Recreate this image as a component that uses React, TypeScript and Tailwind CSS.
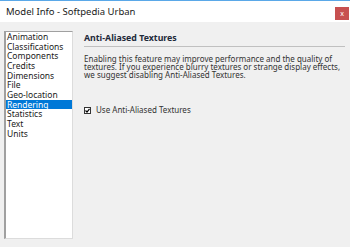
const items = [
  "Animation",
  "Classifications",
  "Components",
  "Credits",
  "Dimensions",
  "File",
  "Geo-location",
  "Rendering",
  "Statistics",
  "Text",
  "Units",
];

export default function App() {
  const selected = "Rendering";

  return (
    <div
      className="flex flex-col w-[350px] h-[247px] bg-[#f0f0f0] overflow-hidden"
      style={{ fontFamily: '"Noto Sans", "Open Sans", sans-serif' }}
    >
      {/* title bar */}
      <div className="flex items-center h-[22px] bg-white border-t border-[#5aa8e8] pl-[6px] pr-[1px]">
        <div className="flex-1 text-[9.5px] text-[#1a1a1a] pt-[2px]">
          Model Info - Softpedia Urban
        </div>
        <div className="flex items-center justify-center w-[14px] h-[13px] bg-[#c75050] mt-[3px]">
          <span className="text-[7px] leading-none text-white">x</span>
        </div>
      </div>

      <div className="flex flex-1">
        {/* category list */}
        <div className="mt-[9px] ml-[4px] w-[69px] h-[208px] bg-white border-l-2 border-t border-[#a0a0a0] border-r border-b border-r-[#dcdcdc] border-b-[#dcdcdc]">
          {items.map((item) => (
            <div
              key={item}
              className={
                item === selected
                  ? "h-[9.67px] leading-[9.67px] pl-[1px] text-[8.5px] bg-[#0078d7] text-white"
                  : "h-[9.67px] leading-[9.67px] pl-[1px] text-[8.5px] text-[#1a1a1a]"
              }
            >
              {item}
            </div>
          ))}
        </div>

        {/* settings panel */}
        <div className="flex-1 ml-[11px] mr-[5px] pt-[11px]">
          <div className="text-[8.8px] font-bold leading-[10px] text-[#1e2a3a] pb-[3px] border-b border-[#c0c0c0]">
            Anti-Aliased Textures
          </div>
          <p className="mt-[8px] text-[8px] leading-[8px] text-[#333]">
            Enabling this feature may improve performance and the quality of
            textures. If you experience blurry textures or strange display
            effects, we suggest disabling Anti-Aliased Textures.
          </p>
          <label className="flex items-center gap-[5px] mt-[25px] text-[8px] text-[#333]">
            <span className="flex items-center justify-center w-[7px] h-[7px] bg-white border border-[#333]">
              <svg width="5" height="5" viewBox="0 0 5 5">
                <path d="M0.5 2.5 L2 4 L4.5 0.8" stroke="#000" strokeWidth="1.2" fill="none" />
              </svg>
            </span>
            Use Anti-Aliased Textures
          </label>
        </div>
      </div>
    </div>
  );
}
